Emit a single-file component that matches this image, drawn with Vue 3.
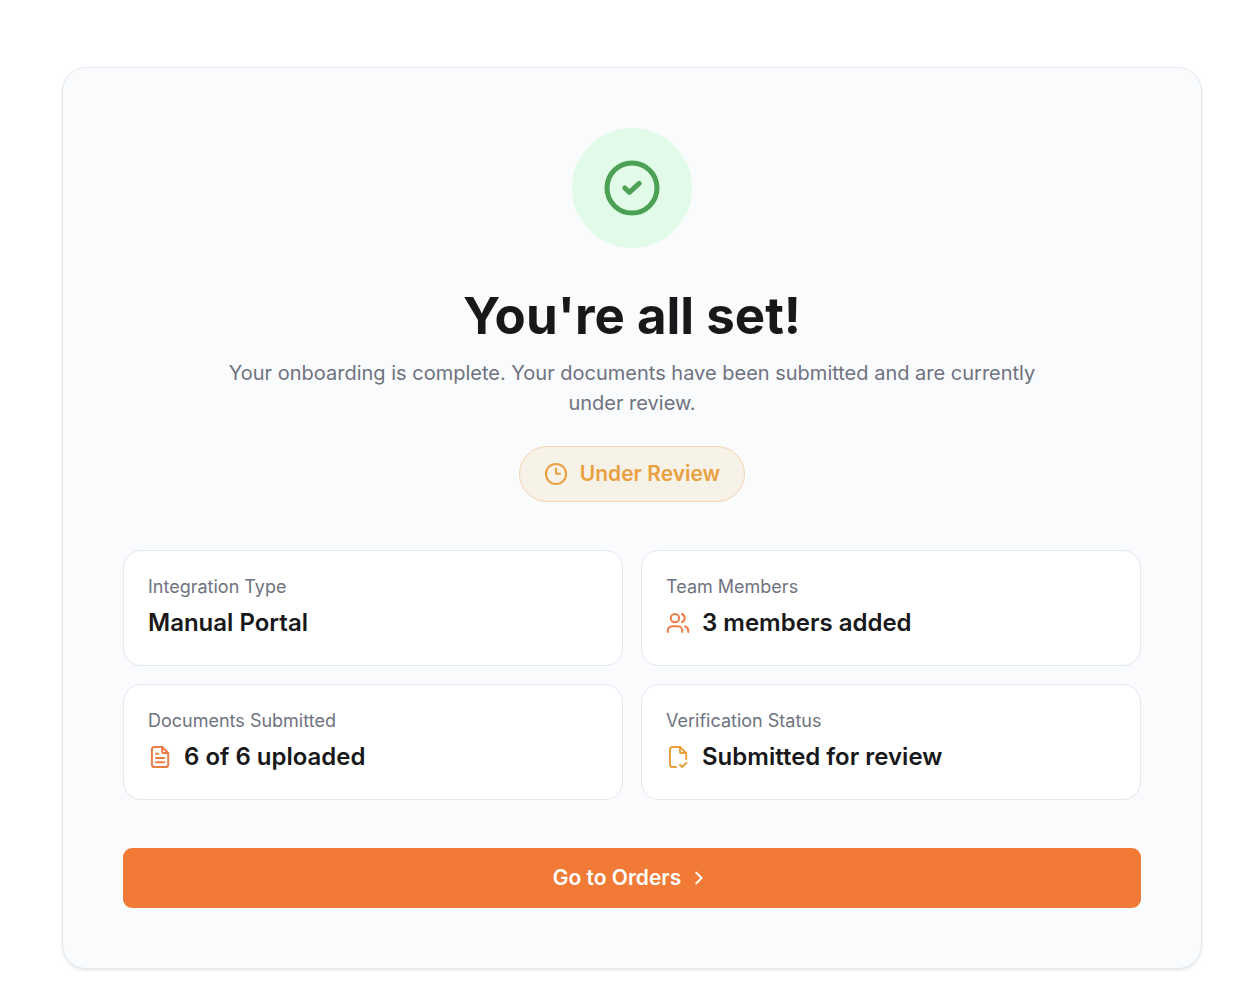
<script setup>
import { ref } from "vue"

const stats = ref([
  { label: "Integration Type", value: "Manual Portal", icon: null },
  { label: "Team Members", value: "3 members added", icon: "users" },
  { label: "Documents Submitted", value: "6 of 6 uploaded", icon: "document" },
  { label: "Verification Status", value: "Submitted for review", icon: "review" },
])
</script>

<template>
  <main class="page">
    <section class="card">
      <div class="success">
        <svg class="success-icon" viewBox="0 0 60 60">
          <circle cx="30" cy="30" r="25" />
          <path d="M22.8 30 27.4 34.3 37.2 25.4" />
        </svg>
      </div>

      <h1 class="title">You're all set!</h1>
      <p class="subtitle">
        Your onboarding is complete. Your documents have been submitted and are currently under review.
      </p>

      <div class="badge">
        <svg class="icon" viewBox="0 0 24 24">
          <circle cx="12" cy="12" r="10.1" />
          <path d="M12 6.6v5.1h4" />
        </svg>
        Under Review
      </div>

      <dl class="stats">
        <div v-for="stat in stats" :key="stat.label" class="stat">
          <dt>{{ stat.label }}</dt>
          <dd :class="stat.icon">
            <svg v-if="stat.icon === 'users'" class="icon" viewBox="0 0 24 24">
              <circle cx="9" cy="7.1" r="4.2" />
              <path d="M16 3a4.4 4.4 0 0 1 0 8.1" />
              <path d="M1.8 21v-1.4a4.4 4.4 0 0 1 4.4-4.4h5.6a4.4 4.4 0 0 1 4.4 4.4V21" />
              <path d="M19 15.4a4.4 4.4 0 0 1 3.2 4.2V21" />
            </svg>
            <svg v-if="stat.icon === 'document'" class="icon" viewBox="0 0 24 24">
              <path d="M14.2 2H6.5A2.6 2.6 0 0 0 3.9 4.6v14.8A2.6 2.6 0 0 0 6.5 22h11.1a2.6 2.6 0 0 0 2.6-2.6V8z" />
              <path d="M14.2 2v4.4A1.6 1.6 0 0 0 15.8 8h4.4" />
              <path d="M8 8.7h2.2M8 13h8.2M8 17.3h8.2" />
            </svg>
            <svg v-if="stat.icon === 'review'" class="icon" viewBox="0 0 24 24">
              <path d="M10 22H6.6A2.6 2.6 0 0 1 4 19.4V4.6A2.6 2.6 0 0 1 6.6 2H14l6.2 6v6" />
              <path d="M14 2v4.4A1.6 1.6 0 0 0 15.6 8h4.6" />
              <path d="M14 20l2 2 4.4-4" />
            </svg>
            {{ stat.value }}
          </dd>
        </div>
      </dl>

      <button type="button" class="action">
        Go to Orders
        <svg class="chevron" viewBox="0 0 24 24">
          <path d="M9.2 6.6l5.4 5.4-5.4 5.4" />
        </svg>
      </button>
    </section>
  </main>
</template>

<style>
body {
  margin: 0;
  background: #ffffff;
}
</style>

<style scoped>
.page {
  padding: 67px 44px 19px 62px;
  font-family: Inter, "Liberation Sans", sans-serif;
  color: #18181a;
}
.card {
  display: flex;
  flex-direction: column;
  align-items: center;
  padding: 60px;
  border: 1px solid #e2e8f0;
  border-radius: 24px;
  background: #fafbfd;
  box-shadow: 0 2px 3px rgba(0, 0, 0, 0.08);
}
.success {
  display: flex;
  align-items: center;
  justify-content: center;
  width: 120px;
  height: 120px;
  border-radius: 50%;
  background: #e1fbe8;
}
.success-icon {
  width: 60px;
  height: 60px;
  fill: none;
  stroke: #4ca154;
  stroke-width: 5;
  stroke-linecap: round;
  stroke-linejoin: round;
}
.title {
  margin: 38px 0 12px;
  font-size: 51px;
  line-height: 60px;
  font-weight: 700;
  text-align: center;
}
.subtitle {
  max-width: 840px;
  margin: 0;
  font-size: 20px;
  line-height: 30px;
  text-align: center;
  color: #6f7280;
}
.icon {
  flex: none;
  width: 24px;
  height: 24px;
  fill: none;
  stroke: currentColor;
  stroke-width: 2;
  stroke-linecap: round;
  stroke-linejoin: round;
}
.badge {
  display: flex;
  align-items: center;
  gap: 12px;
  margin: 28px 0 48px;
  padding: 12px 24px;
  border: 1px solid #f3d5ae;
  border-radius: 28px;
  background: #f7f2e8;
  font-size: 21px;
  line-height: 30px;
  font-weight: 600;
  color: #eaa03f;
}
.stats {
  display: grid;
  grid-template-columns: 1fr 1fr;
  gap: 18px;
  width: 100%;
  margin: 0 0 48px;
}
.stat {
  padding: 24px;
  border: 1px solid #e4e8f1;
  border-radius: 18px;
  background: #ffffff;
}
.stat dt {
  margin-bottom: 6px;
  font-size: 18px;
  line-height: 24px;
  color: #6f7280;
}
.stat dd {
  display: flex;
  align-items: center;
  gap: 12px;
  margin: 0;
  font-size: 24px;
  line-height: 36px;
  font-weight: 600;
}
.users .icon,
.document .icon {
  color: #ee7c45;
}
.review .icon {
  color: #eaa03f;
}
.action {
  display: flex;
  align-items: center;
  justify-content: center;
  gap: 6px;
  width: 100%;
  padding: 15px 24px;
  border: 0;
  border-radius: 9px;
  background: #f07a36;
  font-family: inherit;
  font-size: 21px;
  line-height: 30px;
  font-weight: 600;
  color: #ffffff;
  cursor: pointer;
}
.chevron {
  width: 24px;
  height: 24px;
  fill: none;
  stroke: currentColor;
  stroke-width: 2;
  stroke-linecap: round;
  stroke-linejoin: round;
}
</style>
